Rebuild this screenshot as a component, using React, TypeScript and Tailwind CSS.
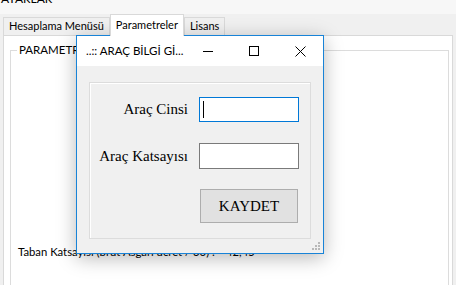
import React from 'react';

const ui = { fontFamily: 'Lato, "Noto Sans", Arial, sans-serif' };
const serif = { fontFamily: '"Liberation Serif", "Times New Roman", serif' };

function Tab({ label, active }: { label: string; active?: boolean }) {
  if (active) {
    return (
      <div className="relative z-10 -mb-px flex h-[22px] items-center border border-b-0 border-[#d9d9d9] bg-white px-[5px] text-[11px] text-black">
        {label}
      </div>
    );
  }
  return (
    <div className="flex h-[18px] items-center border border-b-0 border-[#d9d9d9] bg-[#f0f0f0] px-[5px] text-[11px] text-black">
      {label}
    </div>
  );
}

function TitleButtons() {
  return (
    <div className="flex h-full shrink-0">
      <div className="flex w-[46px] items-center justify-center">
        <svg width="10" height="10" viewBox="0 0 10 10">
          <path d="M0 5.5h10" stroke="#000" strokeWidth="1" />
        </svg>
      </div>
      <div className="flex w-[46px] items-center justify-center">
        <svg width="10" height="10" viewBox="0 0 10 10">
          <rect x="0.5" y="0.5" width="9" height="9" fill="none" stroke="#000" strokeWidth="1" />
        </svg>
      </div>
      <div className="flex w-[46px] items-center justify-center">
        <svg width="11" height="11" viewBox="0 0 11 11">
          <path d="M0.5 0.5l10 10M10.5 0.5l-10 10" stroke="#000" strokeWidth="1" />
        </svg>
      </div>
    </div>
  );
}

function Grip() {
  const dots = [
    [6, 0],
    [3, 3],
    [6, 3],
    [0, 6],
    [3, 6],
    [6, 6],
  ];
  return (
    <svg width="8" height="8" viewBox="0 0 8 8">
      {dots.map(([x, y], i) => (
        <rect key={i} x={x} y={y} width="2" height="2" fill="#b8b8b8" />
      ))}
    </svg>
  );
}

function Dialog() {
  return (
    <div
      className="absolute left-[76px] top-[35px] flex h-[219px] w-[248px] flex-col border border-[#1883d7] bg-[#f0f0f0] shadow-[0_4px_18px_rgba(0,0,0,0.28)]"
      style={ui}
    >
      <div className="flex h-[30px] items-center justify-between bg-white">
        <span className="whitespace-nowrap pl-[9px] text-[11.5px] text-black">..:: ARAÇ BİLGİ Gİ...</span>
        <TitleButtons />
      </div>
      <div className="relative flex-1">
        <div className="mx-[12px] mt-[16px] flex h-[157px] flex-col border border-[#dcdcdc] shadow-[inset_1px_1px_0_#ffffff]">
          <div className="mt-[14px] flex items-center justify-end gap-[11px] pr-[11px]">
            <span className="text-[15px] text-black" style={serif}>
              Araç Cinsi
            </span>
            <div className="flex h-[25px] w-[100px] items-center border border-[#0078d7] bg-white pl-[3px]">
              <div className="h-[17px] w-px bg-black" />
            </div>
          </div>
          <div className="mt-[21px] flex items-center justify-end gap-[11px] pr-[11px]">
            <span className="text-[15px] text-black" style={serif}>
              Araç Katsayısı
            </span>
            <div className="h-[26px] w-[100px] border border-[#7a7a7a] bg-white" />
          </div>
          <div className="mt-[20px] flex justify-end pr-[12px]">
            <div
              className="flex h-[34px] w-[98px] items-center justify-center border border-[#adadad] bg-[#e1e1e1] text-[15px] text-black"
              style={serif}
            >
              KAYDET
            </div>
          </div>
        </div>
        <div className="absolute bottom-[3px] right-[3px] flex">
          <Grip />
        </div>
      </div>
    </div>
  );
}

export default function App() {
  return (
    <div className="relative h-[285px] w-[456px] overflow-hidden bg-[#f0f0f0] text-black" style={ui}>
      <div className="h-[14px] overflow-hidden bg-[#f7f7f7]">
        <div className="relative -top-[8px] pl-[1px] text-[12px] leading-[14px]">AYARLAR</div>
      </div>
      <div className="flex items-end pl-[3px]">
        <Tab label="Hesaplama Menüsü" />
        <Tab label="Parametreler" active />
        <Tab label="Lisans" />
      </div>
      <div className="mx-[3px] h-[290px] border border-[#d9d9d9] bg-white pl-[6px] pr-[3px] pt-[14px]">
        <div className="h-[270px] border border-[#dcdcdc] px-[6px]">
          <div className="-mt-[9px] w-fit bg-white px-[2px] text-[11.5px] leading-[16px]">PARAMETRELER</div>
          <div className="mt-[186px] flex whitespace-nowrap pl-[1px] text-[11.3px] leading-[16px]">
            <span className="w-[208px] shrink-0">Taban Katsayısı (brüt Asgari ücret / 30) :</span>
            <span>42,45</span>
          </div>
        </div>
      </div>
      <Dialog />
    </div>
  );
}
